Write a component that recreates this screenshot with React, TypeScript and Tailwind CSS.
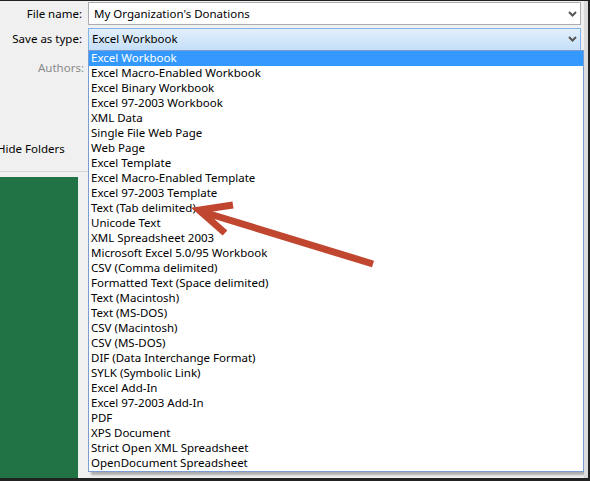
const fileTypes = [
  "Excel Workbook",
  "Excel Macro-Enabled Workbook",
  "Excel Binary Workbook",
  "Excel 97-2003 Workbook",
  "XML Data",
  "Single File Web Page",
  "Web Page",
  "Excel Template",
  "Excel Macro-Enabled Template",
  "Excel 97-2003 Template",
  "Text (Tab delimited)",
  "Unicode Text",
  "XML Spreadsheet 2003",
  "Microsoft Excel 5.0/95 Workbook",
  "CSV (Comma delimited)",
  "Formatted Text (Space delimited)",
  "Text (Macintosh)",
  "Text (MS-DOS)",
  "CSV (Macintosh)",
  "CSV (MS-DOS)",
  "DIF (Data Interchange Format)",
  "SYLK (Symbolic Link)",
  "Excel Add-In",
  "Excel 97-2003 Add-In",
  "PDF",
  "XPS Document",
  "Strict Open XML Spreadsheet",
  "OpenDocument Spreadsheet",
];

function Chevron() {
  return (
    <svg width="9" height="6" viewBox="0 0 9 6" className="shrink-0">
      <path d="M1 1 L4.5 4.5 L8 1" fill="none" stroke="#555" strokeWidth="2" />
    </svg>
  );
}

export default function App() {
  const selected = 0;

  return (
    <div
      className="relative w-[590px] h-[481px] overflow-hidden bg-[#f0f0f0] border-t border-r-2 border-b-[3px] border-[#222] text-[11.5px] text-black"
      style={{ fontFamily: '"Noto Sans", "Liberation Sans", sans-serif' }}
    >
      <div className="flex flex-col h-full">
        {/* file name / save as type rows */}
        <div className="flex items-center h-[24px] pt-[1px]">
          <div className="w-[82px] text-right leading-none">File name:</div>
          <div className="ml-[6px] w-[493px] h-[23px] bg-white border border-[#abadb3] flex items-center justify-between pl-[5px] pr-[3px]">
            <span className="leading-none">My Organization's Donations</span>
            <Chevron />
          </div>
        </div>
        <div className="flex items-center h-[24px] mt-[2px]">
          <div className="w-[82px] text-right leading-none">Save as type:</div>
          <div className="ml-[6px] w-[493px] h-[23px] bg-gradient-to-b from-[#e3effc] to-[#c4dff8] border border-[#7eb4ea] flex items-center justify-between pl-[3px] pr-[3px]">
            <span className="leading-none">Excel Workbook</span>
            <Chevron />
          </div>
        </div>
        <div className="flex items-center h-[26px] mt-[4px]">
          <div className="w-[84px] text-right leading-none text-[#8a8a8a]">Authors:</div>
        </div>

        {/* hide folders strip */}
        <div className="flex items-center h-[28px] mt-[54px] -ml-[3px] leading-none">
          Hide Folders
        </div>
        <div className="w-[88px] mt-[8px] h-px bg-[#d5d5d5]" />

        {/* green backstage area */}
        <div className="flex flex-1 pt-[5px]">
          <div className="w-[78px] bg-[#217346]" />
        </div>
      </div>

      {/* open drop-down list */}
      <div className="absolute left-[88px] top-[49px] w-[496px] bg-white border border-[#7a9cd3] shadow-[3px_3px_2px_rgba(0,0,0,0.28)]">
        {fileTypes.map((t, i) => (
          <div
            key={t}
            className={
              "h-[15px] flex items-center pl-[2px] pb-[1px] leading-none whitespace-nowrap " +
              (i === selected ? "bg-[#3399ff] text-white" : "")
            }
          >
            {t}
          </div>
        ))}
      </div>

      {/* window edge on the right */}
      <div className="absolute right-0 top-0 w-[4px] h-full bg-[#dcdcdc]" />

      {/* callout arrow */}
      <svg
        className="absolute left-0 top-0 pointer-events-none"
        width="590"
        height="481"
        viewBox="0 0 590 481"
      >
        <g stroke="#c1462f" strokeWidth="7" strokeLinecap="butt" strokeLinejoin="miter" fill="none">
          <line x1="373" y1="263" x2="203" y2="211" />
          <polyline points="233,204 199,209 225,232" />
        </g>
      </svg>
    </div>
  );
}
